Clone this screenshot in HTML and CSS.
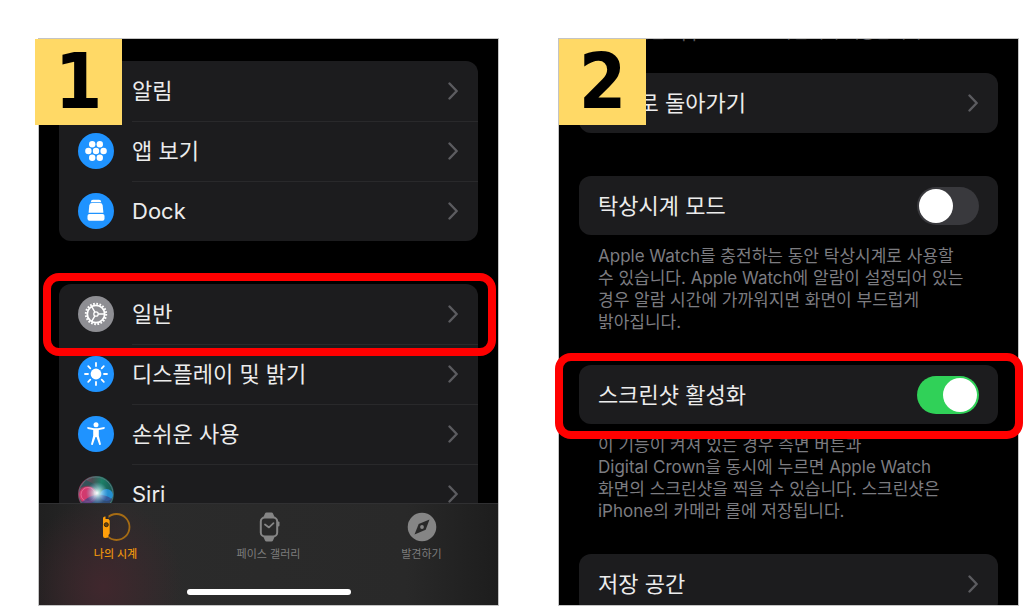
FILE: index.html
```html
<!DOCTYPE html>
<html lang="ko">
<head>
<meta charset="utf-8">
<meta name="viewport" content="width=device-width, initial-scale=1">
<title>Apple Watch 스크린샷 활성화</title>
<link rel="stylesheet" href="styles.css">
</head>
<body>
<svg class="defs" aria-hidden="true">
  <symbol id="chevron" viewBox="0 0 10 18"><path d="M1.5 1.5 8.7 9 1.5 16.5" fill="none" stroke="currentColor" stroke-width="2.4" stroke-linecap="round" stroke-linejoin="round"/></symbol>
</svg>
<main class="steps">
  <section class="phone">
    <span class="step-number step-number-first">1</span>
    <nav class="card card-first">
      <a class="row" href="#"><span class="icon"></span><span class="label">알림</span><svg class="chevron"><use href="#chevron"/></svg></a>
      <a class="row" href="#">
        <svg class="icon" viewBox="0 0 36 36"><circle cx="18" cy="18" r="18" fill="#1f93ff"/><g fill="#fff"><circle cx="14.2" cy="11.3" r="3.2"/><circle cx="21.8" cy="11.3" r="3.2"/><circle cx="10.4" cy="18" r="3.2"/><circle cx="18" cy="18" r="3.2"/><circle cx="25.6" cy="18" r="3.2"/><circle cx="14.2" cy="24.8" r="3.2"/><circle cx="21.8" cy="24.8" r="3.2"/></g></svg>
        <span class="label">앱 보기</span><svg class="chevron"><use href="#chevron"/></svg></a>
      <a class="row" href="#">
        <svg class="icon" viewBox="0 0 36 36"><circle cx="18" cy="18" r="18" fill="#1f93ff"/><g fill="#fff"><path d="M12.7 9.2Q13 6.8 15 6.8h6Q23 6.8 23.3 9.2z"/><path d="M14 10h8q2.4 0 2.7 2.4l.7 7.4H10.6l.7-7.4Q11.600 10 14 10z"/><rect x="9.500" y="21" width="17" height="6.700" rx="2"/></g></svg>
        <span class="label">Dock</span><svg class="chevron"><use href="#chevron"/></svg></a>
    </nav>
    <nav class="card card-next">
      <a class="row highlight" href="#">
        <svg class="icon" viewBox="0 0 36 36"><circle cx="18" cy="18" r="18" fill="#8e8e93"/><g fill="none" stroke="#fff"><circle cx="18" cy="18" r="10.200" stroke-width="2" stroke-dasharray="1.700 1.504"/><circle cx="18" cy="18" r="8.700" stroke-width="1.800"/><circle cx="18" cy="18" r="2.200" stroke-width="1.300"/><path d="M20.200 18h6.500M16.900 16.100l-3.300-5.700M16.900 19.900l-3.300 5.700" stroke-width="1.400"/></g></svg>
        <span class="label">일반</span><svg class="chevron"><use href="#chevron"/></svg></a>
      <a class="row" href="#">
        <svg class="icon" viewBox="0 0 36 36"><circle cx="18" cy="18" r="18" fill="#1f93ff"/><circle cx="18" cy="18" r="5.400" fill="#fff"/><path d="M18 7v3M18 26v3M7 18h3M26 18h3M10.200 10.200l2.100 2.100M23.700 23.700l2.100 2.100M10.200 25.800l2.100-2.100M23.700 12.300l2.100-2.100" stroke="#fff" stroke-width="1.800" stroke-linecap="round"/></svg>
        <span class="label">디스플레이 및 밝기</span><svg class="chevron"><use href="#chevron"/></svg></a>
      <a class="row" href="#">
        <svg class="icon" viewBox="0 0 36 36"><circle cx="18" cy="18" r="18" fill="#1f93ff"/><circle cx="18" cy="8.700" r="2.500" fill="#fff"/><path d="M9.600 11.100Q8.500 12.300 9.900 12.900l5.300 1.200v5.600l-2.100 8.400q.1 1.500 1.600.8L17.500 21h1l2.800 7.900q1.500.7 1.600-.8l-2.100-8.400v-5.600l5.300-1.200q1.400-.6.300-1.800L20 12.200h-4z" fill="#fff"/></svg>
        <span class="label">손쉬운 사용</span><svg class="chevron"><use href="#chevron"/></svg></a>
      <a class="row" href="#">
        <svg class="icon" viewBox="0 0 36 36">
          <defs>
            <radialGradient id="glow"><stop offset="0" stop-color="#fff"/><stop offset=".3" stop-color="#dff" stop-opacity=".7"/><stop offset="1" stop-color="#9cf" stop-opacity="0"/></radialGradient>
            <linearGradient id="orb" x1="0" y1=".3" x2="1" y2=".5"><stop offset="0" stop-color="#a32d59"/><stop offset=".35" stop-color="#4c5055"/><stop offset=".6" stop-color="#1d8068"/><stop offset="1" stop-color="#17504f"/></linearGradient>
          </defs>
          <circle cx="18" cy="18" r="18" fill="url(#orb)"/>
          <circle cx="18" cy="18" r="17" fill="none" stroke="#58777c" stroke-width="1"/>
          <path d="M8 4q12 5 14 13Q14 5 2 12z" fill="#24585a" opacity=".8"/>
          <ellipse cx="10" cy="19" rx="9" ry="8.500" fill="#e33872" opacity=".85"/>
          <ellipse cx="10" cy="18.500" rx="7" ry="7" fill="none" stroke="#ef8bac" opacity=".6"/>
          <ellipse cx="28.500" cy="19" rx="6.500" ry="6" fill="#258fd0"/>
          <path d="M3 27q15-14 31-4L28 33Q18 38 8 33z" fill="#3a4487" opacity=".7"/>
          <circle cx="19" cy="17" r="11" fill="url(#glow)"/>
        </svg>
        <span class="label">Siri</span><svg class="chevron"><use href="#chevron"/></svg></a>
    </nav>
    <nav class="tabbar">
      <div class="tabs">
        <a class="tab tab-active" href="#"><svg class="tab-icon" viewBox="0 0 30 30"><circle cx="15.500" cy="15" r="13" fill="none" stroke="#a66c14" stroke-width="1.800"/><path d="M1.500 3.500h6v4q2 1 2 3v9q0 2-2 3v4h-6Z" fill="#2d2829"/><path d="M2 5.800q1-1.300 2.500-1.200V7h3l1.200 1.500v13L7.500 23v2.500L4 26q-2 0-2-2z" fill="#ff9f0a"/><circle cx="5.300" cy="12.700" r="2" fill="#6e4711" stroke="#382710" stroke-width="1"/></svg>나의 시계</a>
        <a class="tab" href="#"><svg class="tab-icon" viewBox="0 0 30 30"><path d="M9.500 5 11 1.500q.4-1 1.500-1h5q1.100 0 1.500 1L20.500 5M9.500 25l1.500 3.500q.4 1 1.500 1h5q1.100 0 1.500-1l1.500-3.500" fill="#858585"/><rect x="6.800" y="5.500" width="16.400" height="19" rx="4" fill="#292929" stroke="#858585" stroke-width="2"/><rect x="23.500" y="9.500" width="2" height="5" rx="1" fill="#858585"/><path d="m11 12.500 4 2.900 4.500-4.200" fill="none" stroke="#858585" stroke-width="1.800" stroke-linecap="round" stroke-linejoin="round"/></svg>페이스 갤러리</a>
        <a class="tab" href="#"><svg class="tab-icon" viewBox="0 0 30 30"><circle cx="15" cy="15" r="14.300" fill="#858585"/><path d="m22.500 7.500-3.800 10.200-11.200 4.800 4.200-10.600z" fill="#292929"/><circle cx="15" cy="15" r="1.900" fill="#858585"/></svg>발견하기</a>
      </div>
      <span class="home-bar"></span>
    </nav>
  </section>

  <section class="phone">
    <span class="step-number">2</span>
    <p class="note note-cut">앱이 열린 Apple Watch 화면에서 이동합니다.</p>
    <nav class="card">
      <a class="row" href="#"><span class="label">시계로 돌아가기</span><svg class="chevron"><use href="#chevron"/></svg></a>
    </nav>
    <div class="card card-next">
      <label class="row row-switch"><span class="label">탁상시계 모드</span><input class="switch" type="checkbox" role="switch"></label>
    </div>
    <p class="note">Apple Watch를 충전하는 동안 탁상시계로 사용할<br>수 있습니다. Apple Watch에 알람이 설정되어 있는<br>경우 알람 시간에 가까워지면 화면이 부드럽게<br>밝아집니다.</p>
    <div class="card">
      <label class="row row-switch highlight highlight-wide"><span class="label">스크린샷 활성화</span><input class="switch" type="checkbox" role="switch" checked></label>
    </div>
    <p class="note">이 기능이 켜져 있는 경우 측면 버튼과<br>Digital Crown을 동시에 누르면 Apple Watch<br>화면의 스크린샷을 찍을 수 있습니다. 스크린샷은<br>iPhone의 카메라 롤에 저장됩니다.</p>
    <nav class="card">
      <a class="row" href="#"><span class="label">저장 공간</span><svg class="chevron"><use href="#chevron"/></svg></a>
    </nav>
  </section>
</main>
</body>
</html>
```

FILE: styles.css
```css
* { box-sizing: border-box; }

body {
  margin: 0;
  background: #fff;
  font-family: Inter, "Noto Sans CJK KR", sans-serif;
}

a { color: inherit; text-decoration: none; }

.defs { display: none; }

.steps {
  display: grid;
  grid-template-columns: 1fr 1fr;
  grid-template-rows: minmax(0, 1fr);
  gap: 61px;
  height: 100vh;
  min-height: 560px;
  padding: 39px 6px 2px 39px;
}

.phone {
  position: relative;
  min-width: 0;
  padding: 0 20px;
  background: #000;
  box-shadow: 0 0 0 1px #c4c4c4;
  overflow-x: visible;
  overflow-y: clip;
}

.step-number {
  position: absolute;
  top: 0;
  left: 0;
  z-index: 2;
  display: flex;
  align-items: center;
  justify-content: center;
  width: 87px;
  height: 86px;
  background: #ffd966;
  color: #000;
  font: bold 76px/86px "DejaVu Sans Condensed", "DejaVu Sans", sans-serif;
}

.step-number-first { left: -4px; }

.card {
  border-radius: 12px;
  background: #1c1c1e;
}

.card-first { margin-top: 22px; }
.card-next { margin-top: 43px; }

.row {
  position: relative;
  display: flex;
  align-items: center;
  gap: 18px;
  height: 60px;
  padding: 0 20px 0 19px;
  color: #ececec;
  font-size: 22px;
  line-height: 32px;
}

.row-switch { height: 59px; padding-right: 19px; }

.row + .row::before {
  content: "";
  position: absolute;
  top: 0;
  left: 73px;
  right: 0;
  height: 1px;
  background: #29292b;
}

.label { flex: 1; white-space: nowrap; }

.icon { flex: none; width: 36px; height: 36px; }

.chevron { flex: none; width: 10px; height: 18px; color: #5c5c60; }

.highlight::after {
  content: "";
  position: absolute;
  inset: -11px -18px -12px -16px;
  z-index: 1;
  border: 8px solid #f00;
  border-radius: 16px;
  pointer-events: none;
}

.highlight-wide::after { inset: -12px -25px -15px -24px; }

.switch {
  appearance: none;
  flex: none;
  width: 62px;
  height: 38px;
  margin: 0;
  padding: 2px;
  border-radius: 19px;
  background: #39393d;
}

.switch::before {
  content: "";
  display: block;
  width: 34px;
  height: 34px;
  border-radius: 50%;
  background: #fff;
}

.switch:checked { background: #30d158; }
.switch:checked::before { margin-left: auto; }

.note {
  margin: 10px 0 32px;
  padding: 0 19px;
  color: #7c7c80;
  font-size: 17px;
  line-height: 22px;
  white-space: nowrap;
}

.note-cut { margin: -18px 0 30px; color: #58585c; }

.tabbar {
  position: absolute;
  inset: auto 0 0;
  z-index: 1;
  display: flex;
  flex-direction: column;
  align-items: center;
  justify-content: space-between;
  height: 102px;
  padding: 8px 0 10px;
  border-top: 1px solid #303032;
  background:
    radial-gradient(ellipse 80px 90px at 14% 82%, #40272d, transparent),
    linear-gradient(90deg, #202020, #2b2b2b 18%, #292929 80%, #1d1d1d);
}

.tabs {
  display: grid;
  grid-template-columns: repeat(3, 1fr);
  width: 100%;
}

.tab {
  display: flex;
  flex-direction: column;
  align-items: center;
  gap: 4px;
  color: #7d7d7d;
  font-size: 11px;
  line-height: 16px;
}

.tab-active { color: #e8920e; font-weight: 500; }

.tab-icon { width: 30px; height: 30px; }

.home-bar {
  width: 164px;
  height: 6px;
  border-radius: 3px;
  background: #fff;
}
```
